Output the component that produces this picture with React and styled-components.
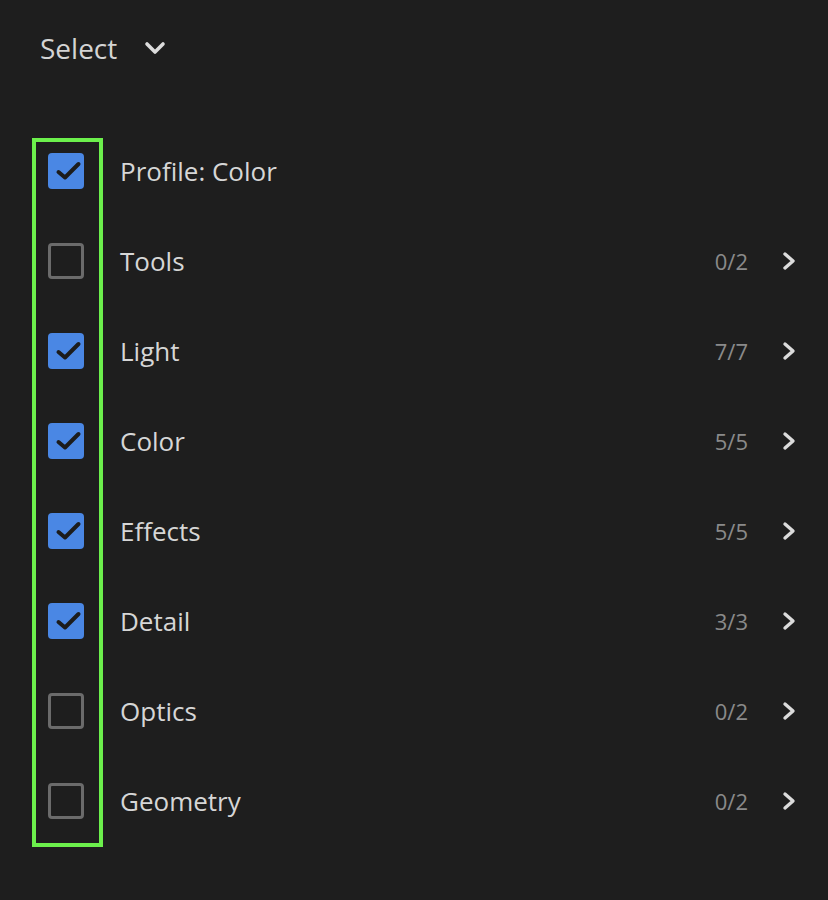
import React from "react";
import styled, { createGlobalStyle } from "styled-components";

const Global = createGlobalStyle`
  html, body { margin: 0; padding: 0; background: #1e1e1e; }
  body { font-family: "Open Sans", "Noto Sans", sans-serif; }
`;

const Page = styled.div`
  width: 828px;
  height: 900px;
  background: #1e1e1e;
  box-sizing: border-box;
  position: relative;
`;

const Header = styled.div`
  height: 96px;
  padding-left: 40px;
  display: flex;
  align-items: center;
  gap: 27px;
  color: #d4d4d4;
  font-size: 28px;
`;

const List = styled.div`
  position: relative;
  margin-top: 30px;
  display: flex;
  flex-direction: column;
`;

const Highlight = styled.div`
  position: absolute;
  left: 32px;
  top: 12px;
  width: 71px;
  height: 709px;
  box-sizing: border-box;
  border: 4px solid #6cf04c;
  pointer-events: none;
`;

const Row = styled.div`
  height: 90px;
  display: flex;
  align-items: center;
  padding-left: 48px;
  padding-right: 32px;
`;

const Box = styled.div`
  width: 36px;
  height: 36px;
  box-sizing: border-box;
  border-radius: 4px;
  flex: none;
  display: flex;
  align-items: center;
  justify-content: center;
  background: ${(p) => (p.$checked ? "#4a87e4" : "transparent")};
  border: ${(p) => (p.$checked ? "none" : "3px solid #6b6b6b")};
`;

const Label = styled.div`
  margin-left: 36px;
  flex: 1;
  color: #d6d6d6;
  font-size: 26px;
`;

const Count = styled.div`
  color: #8a8a8a;
  font-size: 22px;
  margin-right: 34px;
`;

const Chevron = styled.svg`
  width: 14px;
  height: 20px;
  flex: none;
`;

const Check = () => (
  <svg width="36" height="36" viewBox="0 0 36 36">
    <path d="M10.5 19 L17 24.5 L30.5 11" fill="none" stroke="#1c1c1c" strokeWidth="4" strokeLinecap="round" strokeLinejoin="round" />
  </svg>
);

const items = [
  { label: "Profile: Color", checked: true },
  { label: "Tools", checked: false, count: "0/2" },
  { label: "Light", checked: true, count: "7/7" },
  { label: "Color", checked: true, count: "5/5" },
  { label: "Effects", checked: true, count: "5/5" },
  { label: "Detail", checked: true, count: "3/3" },
  { label: "Optics", checked: false, count: "0/2" },
  { label: "Geometry", checked: false, count: "0/2" },
];

export default function App() {
  return (
    <Page>
      <Global />
      <Header>
        <span>Select</span>
        <svg width="22" height="14" viewBox="0 0 22 14">
          <path d="M3 3 L11 11 L19 3" fill="none" stroke="#dcdcdc" strokeWidth="3.6" strokeLinecap="round" strokeLinejoin="round" />
        </svg>
      </Header>
      <List>
        <Highlight />
        {items.map((it) => (
          <Row key={it.label}>
            <Box $checked={it.checked}>{it.checked && <Check />}</Box>
            <Label>{it.label}</Label>
            {it.count && (
              <>
                <Count>{it.count}</Count>
                <Chevron viewBox="0 0 14 20">
                  <path d="M3 3 L11 10 L3 17" fill="none" stroke="#dcdcdc" strokeWidth="3.4" strokeLinecap="round" strokeLinejoin="round" />
                </Chevron>
              </>
            )}
          </Row>
        ))}
      </List>
    </Page>
  );
}
